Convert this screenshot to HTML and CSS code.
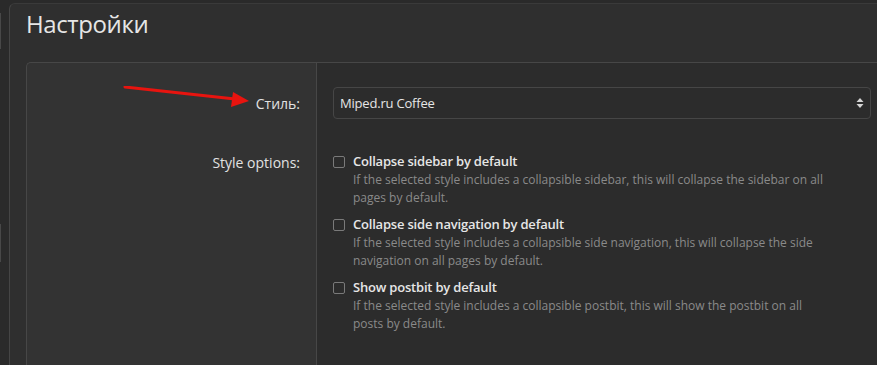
FILE: index.html
```html
<!DOCTYPE html>
<html lang="ru">
<head>
    <meta charset="UTF-8">
    <meta name="viewport" content="width=device-width, initial-scale=1.0">
    <title>Настройки</title>
    <link rel="stylesheet" href="styles.css">
</head>
<body>

    <div class="layout">
        <div class="side">
            <div class="side-tab first"></div>
            <div class="side-tab second"></div>
        </div>

        <div class="main">
            <h1 class="page-title">Настройки</h1>

            <div class="form-block">
                <!-- annotation arrow pointing at the style row -->
                <svg class="pointer" width="140" height="30" viewBox="0 0 140 30">
                    <line x1="2" y1="1" x2="112" y2="13" stroke="#e8140f" stroke-width="3" stroke-linecap="round"/>
                    <polygon points="126,15 110,6 108,21" fill="#e8140f"/>
                </svg>

                <div class="form-row first-row">
                    <div class="row-label">Стиль:</div>
                    <div class="row-input">
                        <div class="select-box">
                            <span>Miped.ru Coffee</span>
                            <svg width="8" height="12" viewBox="0 0 8 12">
                                <polygon points="4,1 7.5,5 0.5,5" fill="#d6d6d6"/>
                                <polygon points="4,11 7.5,7 0.5,7" fill="#d6d6d6"/>
                            </svg>
                        </div>
                    </div>
                </div>

                <div class="form-row">
                    <div class="row-label">Style options:</div>
                    <div class="row-input">
                        <ul class="check-list">
                            <li>
                                <label class="check-label"><input type="checkbox"> Collapse sidebar by default</label>
                                <div class="hint">If the selected style includes a collapsible sidebar, this will collapse the sidebar on all pages by default.</div>
                            </li>
                            <li>
                                <label class="check-label"><input type="checkbox"> Collapse side navigation by default</label>
                                <div class="hint">If the selected style includes a collapsible side navigation, this will collapse the side navigation on all pages by default.</div>
                            </li>
                            <li>
                                <label class="check-label"><input type="checkbox"> Show postbit by default</label>
                                <div class="hint">If the selected style includes a collapsible postbit, this will show the postbit on all posts by default.</div>
                            </li>
                        </ul>
                    </div>
                </div>
            </div>
        </div>
    </div>

</body>
</html>
```

FILE: styles.css
```css
body {
    font-family: "Open Sans", "Noto Sans", sans-serif;
    background-color: #2a2a2a;
    color: #e2e2e2;
    margin: 0;
    overflow: hidden;
}
.layout {
    display: flex;
    height: 365px;
}
.side {
    width: 9px;
    flex-shrink: 0;
    background-color: #2a2a2a;
}
.side-tab {
    width: 1px;
    background-color: #484848;
}
.side-tab.first {
    height: 36px;
    margin-top: 13px;
}
.side-tab.second {
    height: 38px;
    margin-top: 175px;
}
.main {
    flex: 1;
    margin-top: 3px;
    background-color: #2f2f2f;
    border-left: 1px solid #454545;
    border-top: 1px solid #3a3a3a;
    border-top-left-radius: 6px;
    padding-left: 16px;
}
.page-title {
    font-size: 24px;
    font-weight: 400;
    letter-spacing: -0.4px;
    color: #e6e6e6;
    margin: 0;
    padding-top: 4px;
    line-height: 32px;
}
.form-block {
    position: relative;
    margin-top: 22px;
    border: 1px solid #474747;
    border-right: none;
    border-bottom: none;
    border-top-left-radius: 5px;
    background-color: #333333;
    height: 400px;
}
.pointer {
    position: absolute;
    left: 96px;
    top: 23px;
}
.form-row {
    display: grid;
    grid-template-columns: 289px 1fr;
}
.row-label {
    text-align: right;
    padding-right: 16px;
    font-size: 14px;
    color: #e2e2e2;
}
.row-input {
    border-left: 1px solid #474747;
    background-color: #2c2c2c;
    padding-left: 16px;
    padding-right: 6px;
}
.first-row .row-label {
    padding-top: 31px;
}
.first-row .row-input {
    padding-top: 24px;
    padding-bottom: 33px;
}
.select-box {
    display: flex;
    align-items: center;
    justify-content: space-between;
    height: 30px;
    border: 1px solid #464646;
    border-radius: 4px;
    padding: 0 6px;
    font-size: 13px;
    letter-spacing: -0.2px;
    color: #e6e6e6;
}
.form-row + .form-row .row-label {
    padding-top: 1px;
    line-height: 19px;
}
.form-row + .form-row .row-input {
    height: 300px;
}
.check-list {
    list-style: none;
    margin: 0;
    padding: 0 38px 0 0;
}
.check-list li {
    margin-bottom: 8px;
}
.check-label {
    display: flex;
    align-items: center;
    gap: 8px;
    font-size: 13px;
    font-weight: 600;
    letter-spacing: -0.2px;
    line-height: 19px;
    color: #e6e6e6;
}
.check-label input {
    appearance: none;
    width: 12px;
    height: 12px;
    margin: 0;
    border: 1px solid #7a7a7a;
    border-radius: 2px;
    background-color: transparent;
}
.hint {
    padding-left: 20px;
    font-size: 12px;
    line-height: 18px;
    color: #8a8a8a;
}
```
